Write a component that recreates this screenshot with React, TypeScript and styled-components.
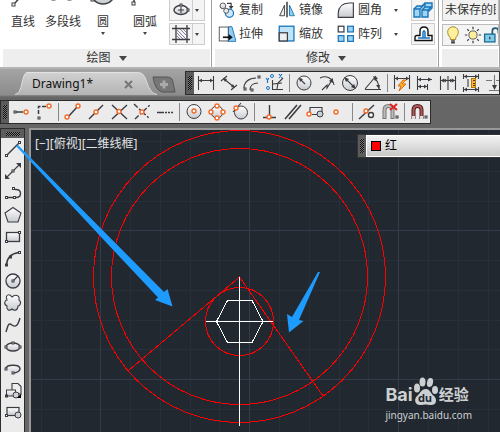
import React from "react";
import styled, { createGlobalStyle } from "styled-components";

const GlobalStyle = createGlobalStyle`
  * { box-sizing: border-box; }
  body { margin: 0; overflow: hidden; }
  button, select { font: inherit; color: inherit; margin: 0; }
`;

const sans = `"Noto Sans", "Noto Sans CJK SC", sans-serif`;

const Page = styled.div`
  display: flex;
  flex-direction: column;
  height: 100vh;
  overflow: hidden;
  background: #666;
  color: #333;
  font-family: ${sans};
  font-size: 12px;
  line-height: 16px;
`;

/* ---------- Ribbon ---------- */
const Ribbon = styled.header`
  display: flex;
  flex: none;
  gap: 3px;
  padding: 0 0 2px 3px;
  background: linear-gradient(#fff, #fff 67px, #b4b4b4 67px);
`;

const Panel = styled.section<{ $width?: number }>`
  display: flex;
  flex-direction: column;
  flex: ${(p) => (p.$width ? `0 0 ${p.$width}px` : "1 0 0")};
  min-width: 0;
  overflow: hidden;
  border-right: 1px solid #a0a0a0;
  background: #fff;
`;

const PanelBody = styled.div`
  display: flex;
  align-items: flex-end;
  height: 49px;
  overflow: hidden;
`;

const PanelTitle = styled.button`
  display: flex;
  align-items: center;
  justify-content: center;
  gap: 8px;
  height: 18px;
  margin-right: 1px;
  padding: 0;
  border: 0;
  background: #eee;
`;

const Caret = styled.span<{ $size?: number }>`
  width: 0;
  height: 0;
  border: ${(p) => p.$size ?? 2}px solid transparent;
  border-top: ${(p) => (p.$size ?? 2) + 1}px solid #444;
  border-bottom: 0;
`;

const BigButton = styled.button<{ $width: number }>`
  display: flex;
  flex-direction: column;
  align-items: center;
  gap: 2px;
  width: ${(p) => p.$width}px;
  height: 75px;
  flex: none;
  padding: 0;
  border: 0;
  background: none;
  white-space: nowrap;
`;

const SplitColumn = styled.div<{ $width: number }>`
  display: flex;
  flex-direction: column;
  flex: none;
  gap: 2px;
  width: ${(p) => p.$width}px;
  margin-left: auto;
  margin-right: 6px;
  padding-bottom: 4px;
`;

const SplitButton = styled.button`
  display: flex;
  align-items: center;
  gap: 2px;
  height: 22px;
  padding: 0;
  border: 1px solid #ccc;
  background: #f4f4f4;
`;

const SplitRule = styled.span`
  flex: none;
  width: 1px;
  height: 20px;
  margin-left: -2px;
  background: #ccc;
`;

const ToolGrid = styled.div`
  display: grid;
  grid-template-columns: 60px 59px 74px;
  grid-auto-rows: 24px;
  padding: 0 0 3px 3px;
`;

const ToolButton = styled.button`
  display: flex;
  align-items: center;
  gap: 3px;
  padding: 0;
  border: 0;
  background: none;
  white-space: nowrap;
  & > ${Caret} { margin-left: 9px; }
`;

const LayerStack = styled.div`
  display: flex;
  flex-direction: column;
  flex: 1;
  min-width: 0;
  gap: 3px;
  padding-bottom: 3px;
`;

const LayerSelect = styled.select`
  width: 100%;
  height: 22px;
  padding: 0 2px;
  border: 1px solid #bbb;
  border-radius: 0;
  appearance: none;
  background: #f2f2f2;
`;

const LayerStrip = styled.div`
  display: flex;
  height: 22px;
  border: 1px solid #bbb;
  background: #f4f4f4;
  overflow: hidden;
`;

const IconButton = styled.button<{ $w: number; $h: number }>`
  display: flex;
  align-items: center;
  justify-content: center;
  flex: none;
  width: ${(p) => p.$w}px;
  height: ${(p) => p.$h}px;
  padding: 0;
  border: 0;
  background: none;
`;

/* ---------- Tabs and toolbars ---------- */
const TabRow = styled.div`
  display: flex;
  flex: none;
  height: 31px;
  padding: 2px 0 0 15px;
  background: linear-gradient(#a4a4a4, #8c8c8c 26px, #666 28px);
`;

const FileTab = styled.div`
  display: flex;
  height: 24px;
  padding-top: 1px;
`;

const TabFace = styled.div`
  display: flex;
  align-items: center;
  justify-content: space-between;
  width: 106px;
  height: 23px;
  padding-left: 5px;
  border-top: 1px solid #e2e2e2;
  background: linear-gradient(#d0d0d0, #b4b4b4);
  color: #111;
  font-size: 12px;
`;

const PlainButton = styled.button`
  display: flex;
  padding: 0;
  border: 0;
  background: none;
`;

const NewTab = styled(PlainButton)`
  align-items: center;
  height: 26px;
  margin: 0 9px 0 -5px;
`;

const Toolbar = styled.div<{ $fill?: boolean }>`
  display: flex;
  flex: ${(p) => (p.$fill ? "1 0 0" : "none")};
  align-items: center;
  height: 24px;
  min-width: 0;
  overflow: hidden;
  border: 1px solid #2c2c2c;
  background: #ebebeb;
`;

const Grip = styled.span<{ $across?: boolean }>`
  display: flex;
  align-items: center;
  justify-content: center;
  flex: none;
  width: ${(p) => (p.$across ? "100%" : "8px")};
  height: ${(p) => (p.$across ? "9px" : "100%")};
  background: #5c5c5c;
  &::before {
    content: "";
    width: ${(p) => (p.$across ? "14px" : "4px")};
    height: ${(p) => (p.$across ? "4px" : "14px")};
    background: repeating-conic-gradient(#111 0 25%, #777 0 50%) 0 0 / 2px 2px;
  }
`;

const Separator = styled.span`
  flex: none;
  width: 1px;
  height: 18px;
  margin: 0 2px 0 3px;
  background: #888;
`;

const SnapRow = styled.div`
  display: flex;
  flex: none;
  height: 28px;
`;

/* ---------- Workspace ---------- */
const Workspace = styled.main`
  position: relative;
  display: flex;
  flex: 1;
  min-height: 0;
  gap: 4px;
`;

const DrawBar = styled.nav`
  display: flex;
  flex-direction: column;
  align-items: center;
  flex: none;
  width: 25px;
  overflow: hidden;
  border: 1px solid #2c2c2c;
  border-bottom: 0;
  background: #ebebeb;
`;

const Viewport = styled.section`
  position: relative;
  flex: 1;
  min-width: 0;
  border-top: 2px solid #999;
  border-left: 2px solid #999;
  background: #212830;
  overflow: hidden;
`;

const Drawing = styled.svg`
  display: block;
  width: 100%;
  height: 100%;
`;

const ViewLabel = styled.div`
  position: absolute;
  left: 4px;
  top: 6px;
  color: #e4e4e4;
`;

const ColorBar = styled.div`
  position: absolute;
  left: 326px;
  right: 0;
  top: 4px;
  display: flex;
  height: 24px;
  border: 1px solid #333;
  border-right: 0;
`;

const ColorField = styled.label`
  display: flex;
  flex: 1;
  align-items: center;
  gap: 4px;
  padding-left: 4px;
  border: 1px solid #fff;
  border-right: 0;
  background: linear-gradient(#f0f0f0, #dedede 50%, #c8c8c8);
`;

const Swatch = styled.span`
  width: 10px;
  height: 10px;
  border: 1px solid #000;
  background: #f00;
`;

const ColorSelect = styled.select`
  flex: 1;
  padding: 0;
  border: 0;
  appearance: none;
  background: none;
  color: #000;
`;

const Watermark = styled.div`
  position: absolute;
  right: 28px;
  bottom: 10px;
  display: flex;
  flex-direction: column;
  align-items: flex-start;
  color: #cdd0d2;
`;

const Brand = styled.div`
  display: flex;
  align-items: flex-end;
  font-family: Inter, "Noto Sans CJK SC", sans-serif;
  font-size: 18px;
  font-weight: 700;
  line-height: 22px;
`;

const BrandTail = styled.span`
  margin-left: 1px;
  font-size: 15px;
`;

const Site = styled.a`
  margin-top: 2px;
  color: inherit;
  font-size: 10px;
  line-height: 14px;
  text-decoration: none;
`;

const ArrowLayer = styled.svg`
  position: absolute;
  inset: 0;
  width: 100%;
  height: 100%;
  pointer-events: none;
`;

/* ---------- Icons, each on a 22 x 22 grid ---------- */
const K = "#3c3c42";
const O = "#f26a2a";
const Dot = ({ x, y, r = 2 }: { x: number; y: number; r?: number }) => (
  <circle cx={x} cy={y} r={r} fill="#fff" stroke={O} strokeWidth="1.4" />
);
const Node = ({ x, y }: { x: number; y: number }) => (
  <rect x={x - 1} y={y - 1} width="2" height="2" fill="#fff" stroke={K} strokeWidth="1" />
);
const L = ({ d, c = K, w = 1.1, dash, fill = "none" }: { d: string; c?: string; w?: number; dash?: string; fill?: string }) => (
  <path d={d} fill={fill} stroke={c} strokeWidth={w} strokeDasharray={dash} />
);
const Glyph = ({ children, size = 22 }: { children: React.ReactNode; size?: number }) => (
  <svg width={size} height={size} viewBox="0 0 22 22" fill="none" aria-hidden="true">{children}</svg>
);

type Tool = [string, React.ReactNode] | null;

const dimTools: Tool[] = [
  ["线性", <><L d="M3.5 4v14M18.5 4v14M4 8.5h14" /><path d="M4 8.5l3-2v4zM18 8.5l-3-2v4z" fill={K} /></>],
  ["对齐", <><L d="M3 9l6-5M13 18l6-5M6 7l10 8" /><path d="M5 6l4 1-2 3zM17 16l-4-1 2-3z" fill={K} /></>],
  ["弧长", <><L d="M3 16c0-6 5-10 12-10M9 18c0-4 3-7 8-7" /><Node x={4} y={17} /><Node x={18} y={5} /><Node x={11} y={18} /></>],
  ["坐标", <><L d="M8.5 8v10M8 17.5h11M9 12l9-1M13 17l1-6 5-5" /><L d="M2 6l1.5 2L5 6M3.5 8v3M15 2l3 4M18 2l-3 4" c="#1674c4" /><circle cx="8" cy="4" r="1.5" stroke="#1674c4" /><circle cx="4" cy="16" r="1.5" stroke="#1674c4" /></>],
  null,
  ["半径", <><circle cx="11" cy="11" r="7" fill="url(#metal)" stroke={K} /><L d="M12 12L7 7" /><path d="M6 6l4 1-3 3z" fill={K} /></>],
  ["折弯", <><L d="M4 6c6-3 13 0 14 7M6 18l5-5v3l5-8" /><path d="M17 6v5l-4-2z" fill={K} /></>],
  ["直径", <><circle cx="11" cy="11" r="7.5" fill="url(#metal)" stroke={K} /><L d="M6 6l10 10" /><path d="M5 5l5 2-3 3zM17 17l-5-2 3-3z" fill={K} /></>],
  ["角度", <><L d="M3 17.5h16M3 17L14 4M12 6c4 3 5 6 5 11" /><path d="M11 4l5 2-3 3zM17 17l-3-4h4z" fill={K} /></>],
  null,
  ["快速标注", <><L d="M3.5 3v14M18.5 3v14M4 6.5h14" /><path d="M4 6.5l3-2v4zM18 6.5l-3-2v4z" fill={K} /><path d="M12 8l-5 6h3l-2 5 7-7h-4l4-4z" fill="#ffb52e" stroke="#d86e10" /></>],
  ["基线", <><L d="M3.5 4v14M4 7.5h14M13.5 12v6M4 14.5h9" /><path d="M18 7.5l-4-2v4zM13 14.5l-3-2v4zM4 7.5l3-2v4zM4 14.5l3-2v4z" fill={K} /></>],
  ["连续", <><L d="M3.5 4v14M11 4v14M18.5 4v14M4 8.5h14" /><path d="M4 8.5l3-2v4zM10.5 8.5l-3-2v4zM11.5 8.5l3-2v4zM18 8.5l-3-2v4z" fill={K} /></>],
  ["间距", <><L d="M3.5 2v5M18.5 2v5M3.5 15v5M18.5 15v5M4 4.5h14M4 17.5h14M8 7v8" /><path d="M4 4.5l3-2v4zM18 4.5l-3-2v4zM4 17.5l3-2v4zM18 17.5l-3-2v4z" fill={K} /><rect x="11.5" y="6.5" width="4" height="9" fill="#ffb52e" stroke="#b87800" /><L d="M13 8.5h2M13 11.5h2M13 13.5h2" /></>],
  ["打断", <><L d="M3 8.5h6M13 8.5h8M11.5 3v14M6 18.5h12" c="#777" /><path d="M9 13h5l-2.5 5z" fill={K} /></>],
];

const snapTools: Tool[] = [
  ["临时追踪点", <><L d="M6 11h7" w={1.5} /><Node x={5} y={11} /><Dot x={16} y={11} /></>],
  ["捕捉自", <><L d="M5.5 13V5.5H14" w={1.5} dash="4 1.5" /><Node x={6} y={17} /><Dot x={16} y={5} /></>],
  null,
  ["端点", <><L d="M6 16L16 5" w={1.5} /><Dot x={5} y={16} /><Dot x={16} y={5} /></>],
  ["中点", <><L d="M4 18L18 4" w={1.4} /><Dot x={11} y={11} /></>],
  ["交点", <><L d="M4 4l15 14M4 18L19 4" w={1.4} /><Dot x={11} y={10.5} /></>],
  ["外观交点", <><L d="M3 3l16 15M4 18L19 4" w={1.4} dash="5 2 2 2" /><Dot x={11} y={11} /></>],
  ["延长线", <L d="M3 11.5h16" w={1.5} dash="7 1 2 1 2 1" />],
  null,
  ["圆心", <><circle cx="11" cy="10.5" r="7" fill="url(#metal)" stroke={K} /><Dot x={11} y={10} /></>],
  ["象限点", <><circle cx="11" cy="11" r="6" fill="url(#metal)" stroke={K} /><Dot x={11} y={5} /><Dot x={5} y={11} /><Dot x={17} y={11} /><Dot x={11} y={17} /></>],
  ["切点", <><circle cx="12" cy="11.5" r="6.5" fill="url(#metal)" stroke={K} /><L d="M4 11l8-9" /><Dot x={7} y={7} /></>],
  null,
  ["垂足", <><L d="M11.5 4v11M5 16.5h13" w={1.4} /><Dot x={11} y={16} /></>],
  ["平行线", <L d="M4 18L16 4M8 18L20 4" w={1.6} />],
  ["插入点", <><L d="M6 12V6.5h12V12M8 13.5h5" /><circle cx="16" cy="13" r="3" fill="#c8d0d6" stroke={K} /><Dot x={5} y={13} /></>],
  ["节点", <Dot x={9} y={11} />],
  null,
  ["最近点", <><L d="M3 18L18 4" w={1.4} /><Dot x={10} y={10} /><circle cx="15" cy="14" r="2.5" fill="#fff" stroke={K} strokeWidth="1.4" /></>],
  ["无捕捉", <><L d="M5.5 18V9q0-4 4-4t4 4v9" c="#777" w={4} /><L d="M5.5 17V9q0-4 4-4t4 4v8" c="#bbb" w={2} /><L d="M11 3l7 6M18 3l-7 6" c="#d22" w={2} /><Node x={18} y={16} /></>],
  null,
  ["捕捉设置", <><L d="M5.5 18V9q0-4 4-4t4 4v9" c="#402020" w={4} /><L d="M5.5 17V9q0-4 4-4t4 4v8" c="#b55" w={2} /><L d="M5.5 15v3M13.5 15v3" c="#ddd" w={3} /><Node x={18} y={16} /></>],
];

const drawTools: Tool[] = [
  ["直线", <><L d="M4 18L18 4" w={1.4} /><Node x={4.5} y={17.5} /><Node x={17.5} y={4.5} /></>],
  ["构造线", <><L d="M4 18L18 4" /><path d="M3 19v-5l5 5zM19 3v5l-5-5z" fill={K} /><Node x={11} y={11} /></>],
  ["多段线", <><L d="M5 15.5h9c6 0 6-8 0-8h-1" w={1.4} /><Node x={4.5} y={15.5} /><Node x={12.5} y={15.5} /><Node x={11.5} y={6.5} /></>],
  ["多边形", <L d="M11 3.5L19 9l-3 9H6L3 9z" fill="url(#metal)" />],
  ["矩形", <><rect x="4.5" y="6.5" width="13" height="9" fill="url(#metal)" stroke={K} strokeWidth="1.3" /><Node x={4.5} y={15.5} /><Node x={17.5} y={6.5} /></>],
  ["圆弧", <><L d="M4.5 17Q5 6 17 4.5" w={1.4} /><Node x={4.5} y={17} /><Node x={8.5} y={9} /><Node x={17.5} y={4.5} /></>],
  ["圆", <><circle cx="11" cy="11" r="7" fill="url(#metal)" stroke={K} strokeWidth="1.3" /><L d="M11 11l5-5" /><Node x={11} y={11} /></>],
  ["修订云线", <L d="M10 5c3-3 8-2 7 3 3 2 1 6-1 6 0 5-4 5-6 3-3 3-6 0-5-3-4-2-2-6 0-6-2-5 2-7 5-3z" fill="url(#metal)" />],
  ["样条曲线", <L d="M4 18c2-6 2-10 6-7s6 0 8-7" w={1.4} />],
  ["椭圆", <><ellipse cx="11" cy="11" rx="7" ry="4" fill="url(#metal)" stroke={K} strokeWidth="1.3" /><Node x={4} y={11} /><Node x={18} y={11} /><Node x={11} y={7} /></>],
  ["椭圆弧", <><L d="M4 11c0-5 14-5 14 0 0 2-3 4-7 4" w={1.4} fill="url(#metal)" /><Node x={4} y={11} /><Node x={11} y={15} /></>],
  ["插入块", <><L d="M10 11V3.5h6l3 3v8z" fill="#eee" /><rect x="4.5" y="10" width="9" height="6" fill="url(#metal)" stroke={K} /><circle cx="14" cy="15" r="3" fill="#ccd2d8" stroke={K} /><path d="M19 14v4h-4z" fill="#000" /><Node x={4.5} y={16} /></>],
  ["创建块", <><rect x="5" y="5.5" width="12" height="8" fill="url(#metal)" stroke={K} strokeWidth="1.2" /><circle cx="16" cy="13" r="3" fill="#ccd2d8" stroke={K} /><Node x={4.5} y={13.5} /></>],
];

const ToolList = ({ tools, w, h }: { tools: Tool[]; w: number; h: number }) => (
  <>
    {tools.map((t, i) =>
      t ? (
        <IconButton key={i} $w={w} $h={h} aria-label={t[0]}><Glyph>{t[1]}</Glyph></IconButton>
      ) : (
        <Separator key={i} />
      )
    )}
  </>
);

const bigTools: [string, number, boolean, React.ReactNode][] = [
  ["直线", 40, false, <><L d="M8 26L26 6" w={1.5} /><rect x="5" y="26" width="3" height="3" fill="#fff" stroke={K} /></>],
  ["多段线", 40, false, <><L d="M7 22h17c7 0 7-10 0-12" w={1.5} /><rect x="5" y="20" width="3" height="3" fill="#fff" stroke={K} /><rect x="21" y="20" width="3" height="3" fill="#fff" stroke={K} /></>],
  ["圆", 40, true, <><circle cx="16" cy="15" r="12" fill="url(#metal)" stroke={K} strokeWidth="1.5" /><rect x="4" y="21" width="3" height="3" fill="#fff" stroke={K} /></>],
  ["圆弧", 44, true, <><L d="M5 25C5 16 9 8 24 5" w={1.5} /><rect x="3" y="25" width="3" height="3" fill="#fff" stroke={K} /></>],
];

const modifyTools: [string, boolean, React.ReactNode][] = [
  ["复制", false, <><circle cx="6" cy="6" r="3.5" fill="url(#metal)" stroke={K} /><circle cx="14" cy="15" r="5" fill="#cfe8f8" stroke="#1a75b8" strokeWidth="1.5" /><circle cx="10" cy="12" r="3" fill="#eee" stroke={K} /><L d="M11 3h5v5" w={1.5} /><path d="M13 6h6l-3 4z" fill={K} /></>],
  ["镜像", false, <><L d="M2 18L8 5v13z" fill="#eee" /><L d="M20 18L14 5v13z" c="#1a75b8" fill="#8fcdf3" /><L d="M11 1v19" c="#111" w={1.5} /></>],
  ["圆角", true, <L d="M1.5 20V15Q2 3 15 2.5h5V20z" fill="url(#metal)" w={1.4} />],
  ["拉伸", false, <><L d="M13 2l4 0 5 18H12z" c="#1a75b8" fill="#8fcdf3" /><rect x="1.5" y="2.5" width="11" height="17" fill="#fff" stroke={K} /><L d="M6 15h9" w={2} c="#111" /><path d="M13 11l5 4-5 4z" fill="#111" /></>],
  ["缩放", false, <><rect x="1.5" y="1.5" width="18" height="18" fill="#bfe3f8" stroke="#1a75b8" strokeWidth="1.6" /><rect x="1.5" y="9.5" width="10" height="10" fill="#eee" stroke={K} strokeWidth="1.5" /></>],
  ["阵列", true, <><rect x="1.5" y="1.5" width="7" height="7" fill="#fff" stroke={K} strokeWidth="1.5" /><g fill="#9ed5f6" stroke="#1a75b8" strokeWidth="1.5"><rect x="13" y="1.5" width="7" height="7" /><rect x="1.5" y="13" width="7" height="7" /><rect x="13" y="13" width="7" height="7" /></g></>],
];

const gridMajorX = [100, 249, 398];
const gridMinorX = [41, 71, 130, 160, 190, 219, 279, 309, 339, 368, 428, 458, 488];
const gridMajorY = [230, 379];
const gridMinorY = [141, 171, 201, 260, 290, 320, 349, 409];

export default function App() {
  return (
    <Page>
      <GlobalStyle />
      <Ribbon>
        <Panel $width={209}>
          <PanelBody>
            {bigTools.map(([name, w, menu, art]) => (
              <BigButton key={name} $width={w}>
                <svg width="32" height="38" viewBox="0 0 32 38" fill="none" aria-hidden="true">
                  <g transform="translate(0 3)">{art}</g>
                </svg>
                <span>{name}</span>
                {menu && <Caret />}
              </BigButton>
            ))}
            <SplitColumn $width={36}>
              <SplitButton aria-label="椭圆">
                <Glyph><ellipse cx="11" cy="11" rx="7" ry="4.5" fill="url(#metal)" stroke={K} strokeWidth="1.4" /><L d="M11 8v6M8 11h6" /><Node x={18} y={11} /><Node x={11} y={6} /></Glyph>
                <SplitRule />
                <Caret />
              </SplitButton>
              <SplitButton aria-label="图案填充">
                <Glyph><L d="M6 2v18M17 2v18M2 5.5h18M2 16.5h18" w={1.3} /><L d="M7 7l9 9M10 6l7 7M13 6l4 4M7 10l6 6M7 13l3 3" c="#668" w={0.8} /></Glyph>
                <SplitRule />
                <Caret />
              </SplitButton>
            </SplitColumn>
          </PanelBody>
          <PanelTitle>绘图 <Caret $size={4} /></PanelTitle>
        </Panel>
        <Panel $width={224}>
          <PanelBody>
            <ToolGrid>
              {modifyTools.map(([name, menu, art]) => (
                <ToolButton key={name}>
                  <Glyph size={18}>{art}</Glyph>
                  <span>{name}</span>
                  {menu && <Caret />}
                </ToolButton>
              ))}
            </ToolGrid>
            <SplitColumn $width={24}>
              <SplitButton aria-label="分解">
                <Glyph><g fill="#9ed5f6" stroke="#1a75b8" strokeWidth="1.4"><path d="M2 10h6v8H2zM2 10l3-3h6l-3 3M13 4h7v5l-3 3h-4zM13 4l-3 3" /><path d="M10 11h6v7h-6zM10 11l3-3h6l-3 3" /></g></Glyph>
              </SplitButton>
              <SplitButton aria-label="偏移">
                <Glyph><L d="M3 17.5h17v-5h-4V8q0-4-4-4T8 8v4.5H5q-2 0-2 2z" c="#111" w={1.4} fill="#fff" /><L d="M6 15h12M11 15V9q1-2 2 0v6" c="#1674c4" w={1.5} /></Glyph>
              </SplitButton>
            </SplitColumn>
          </PanelBody>
          <PanelTitle>修改 <Caret $size={4} /></PanelTitle>
        </Panel>
        <Panel>
          <PanelBody>
            <LayerStack>
              <LayerSelect aria-label="图层状态"><option>未保存的图层状态</option></LayerSelect>
              <LayerStrip>
                <IconButton $w={20} $h={20} aria-label="开关图层"><Glyph size={20}><L d="M8 14C3 9 5 2 11 2s8 7 3 12v2H8z" c="#a98b2c" fill="#fff19c" /><L d="M9 17.5h4M9 19.5h4" w={1.6} /></Glyph></IconButton>
                <IconButton $w={19} $h={20} aria-label="冻结图层"><Glyph size={18}><circle cx="11" cy="11" r="5" fill="#fff19c" stroke={K} /><L d="M11 1v3M11 18v3M1 11h3M18 11h3M4 4l2 2M16 16l2 2M18 4l-2 2M4 18l2-2" w={1.5} /></Glyph></IconButton>
                <IconButton $w={19} $h={20} aria-label="锁定图层"><Glyph size={20}><rect x="3" y="10" width="12" height="9" fill="#7fcbe8" stroke="#1b6c93" strokeWidth="1.5" /><L d="M12 10V6q0-3 3.5-3T19 6v3" c="#245a78" w={2} /><L d="M9 13v3" w={1.5} /></Glyph></IconButton>
              </LayerStrip>
            </LayerStack>
          </PanelBody>
          <PanelTitle aria-label="图层" />
        </Panel>
      </Ribbon>

      <TabRow>
        <FileTab>
          <svg width="12" height="23" viewBox="0 0 12 23" aria-hidden="true"><path d="M0 23Q5 22 7 11Q9 0 12 0V23z" fill="url(#tab)" /><path d="M0 22.5Q5 22 7 11Q9 1 12 .5" fill="none" stroke="#ddd" /></svg>
          <TabFace>
            <span>Drawing1*</span>
            <PlainButton aria-label="关闭">
              <svg width="9" height="9" viewBox="0 0 9 9" aria-hidden="true"><path d="M1 1l7 7M8 1L1 8" stroke="#777" strokeWidth="2" /></svg>
            </PlainButton>
          </TabFace>
          <svg width="24" height="23" viewBox="0 0 24 23" aria-hidden="true"><path d="M0 0H4Q11 0 13 8Q17 22 24 23H0z" fill="url(#tab)" /><path d="M0 .5H4Q11 .5 13 8Q17 22 24 22.5" fill="none" stroke="#ddd" /></svg>
        </FileTab>
        <NewTab aria-label="新建">
          <svg width="24" height="17" viewBox="0 0 24 17" aria-hidden="true"><path d="M1 1H15Q21 1 21 7L23 16H10Q3 14 1 1z" fill="#777" stroke="#555" /><path d="M12 4.5v8M8 8.5h8" stroke="#aaa" strokeWidth="3" /></svg>
        </NewTab>
        <Toolbar $fill role="toolbar" aria-label="标注">
          <Grip />
          <ToolList tools={dimTools} w={23} h={22} />
        </Toolbar>
      </TabRow>

      <SnapRow>
        <Toolbar role="toolbar" aria-label="对象捕捉">
          <Grip />
          <ToolList tools={snapTools} w={23} h={22} />
        </Toolbar>
      </SnapRow>

      <Workspace>
        <DrawBar aria-label="绘图工具">
          <Grip $across />
          <ToolList tools={drawTools} w={23} h={22} />
        </DrawBar>
        <Viewport>
          <Drawing aria-label="图形">
            <defs>
              <linearGradient id="metal" x1="0" y1="0" x2="0" y2="1"><stop stopColor="#fff" /><stop offset="1" stopColor="#c6cad0" /></linearGradient>
              <linearGradient id="tab" x1="0" y1="0" x2="0" y2="1"><stop stopColor="#d0d0d0" /><stop offset="1" stopColor="#b4b4b4" /></linearGradient>
            </defs>
            <g transform="translate(-31 -130)">
              <g stroke="#272f3b">
                {gridMinorX.map((x) => <path key={x} d={`M${x + 0.5} 130V2000`} />)}
                {gridMinorY.map((y) => <path key={y} d={`M31 ${y + 0.5}H4000`} />)}
              </g>
              <g stroke="#343c4c">
                {gridMajorX.map((x) => <path key={x} d={`M${x + 0.5} 130V2000`} />)}
                {gridMajorY.map((y) => <path key={y} d={`M31 ${y + 0.5}H4000`} />)}
              </g>
              <g fill="none" stroke="#f00" shapeRendering="crispEdges">
                <circle cx="239.5" cy="276.5" r="146" />
                <circle cx="239.5" cy="276.5" r="128" />
                <circle cx="239.5" cy="321.5" r="34" />
                <path d="M128.5 370.5L239.5 277L323 396" />
              </g>
              <g fill="none" stroke="#fff" shapeRendering="crispEdges">
                <path d="M239.5 277V426M206 321.5H273" />
                <path d="M227.5 300.5H252L263 321.5L252 342.5H227.5L216.5 321.5z" />
              </g>
            </g>
          </Drawing>
          <ViewLabel>[−][俯视][二维线框]</ViewLabel>
          <ColorBar>
            <Grip />
            <ColorField>
              <Swatch />
              <ColorSelect aria-label="颜色"><option>红</option></ColorSelect>
            </ColorField>
          </ColorBar>
          <Watermark>
            <Brand>
              <span>Bai</span>
              <svg width="25" height="29" viewBox="0 0 25 29" aria-hidden="true">
                <g fill="#cdd0d2">
                  <ellipse cx="4" cy="11" rx="3" ry="4.5" />
                  <ellipse cx="9.5" cy="5" rx="3" ry="4.5" />
                  <ellipse cx="17" cy="5.5" rx="3" ry="4.5" transform="rotate(12 17 5.5)" />
                  <ellipse cx="22" cy="13" rx="3" ry="4" />
                  <path d="M13 12C8 12 7 17 4 19C0 23 3 29 8 28Q13 27 17 28C23 29 25 23 21 19C18 17 17 12 13 12z" />
                </g>
                <text x="12" y="25" textAnchor="middle" fontFamily="Inter, sans-serif" fontSize="11" fontWeight="700" fill="#212830">du</text>
              </svg>
              <BrandTail>经验</BrandTail>
            </Brand>
            <Site href="#">jingyan.baidu.com</Site>
          </Watermark>
        </Viewport>
        <ArrowLayer aria-hidden="true">
          <g transform="translate(0 -128)" fill="#1e9bff">
            <path d="M16 146L18 145L164 292L167.5 289L172.5 306.5L155 300L158 297.5L110 246.5z" />
            <path d="M318 272L320 272L299 320L303.5 321L289 332.5L287 314L292 317z" />
          </g>
        </ArrowLayer>
      </Workspace>
    </Page>
  );
}
